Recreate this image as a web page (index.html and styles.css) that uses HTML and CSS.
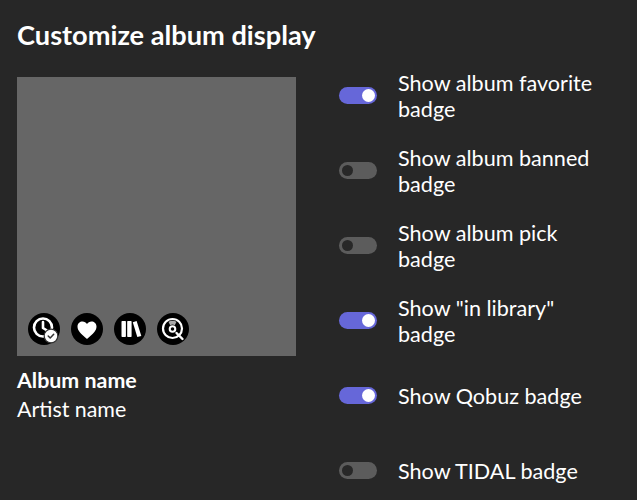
FILE: index.html
```html
<!DOCTYPE html>
<html lang="en">
<head>
<meta charset="utf-8">
<title>Customize album display</title>
<link rel="stylesheet" href="styles.css">
</head>
<body>
<main class="panel">
  <h1 class="title">Customize album display</h1>
  <div class="columns">
    <section class="preview">
      <div class="cover">
        <div class="badges">
          <span class="badge">
            <svg viewBox="0 0 32 32" width="32" height="32">
              <circle cx="15" cy="14.500" r="9" fill="none" stroke="#fff" stroke-width="2.600"/>
              <path d="M15 9V15L19 17.500" fill="none" stroke="#fff" stroke-width="2.600" stroke-linecap="round" stroke-linejoin="round"/>
              <circle cx="23" cy="23" r="6.800" fill="#fff" stroke="#333" stroke-width="1.200"/>
              <path d="M20.200 23l2 2 3.500-3.800" fill="none" stroke="#333" stroke-width="1.500" stroke-linecap="round" stroke-linejoin="round"/>
            </svg>
          </span>
          <span class="badge">
            <svg viewBox="0 0 32 32" width="32" height="32">
              <path d="M16 26C9.500 20.800 6.500 17.600 6.500 13.600 6.500 10.500 8.900 8.500 11.500 8.500c1.900 0 3.500.9 4.500 2.600 1-1.700 2.600-2.600 4.500-2.600 2.600 0 5 2 5 5.100 0 4-3 7.200-9.500 12.400z" fill="#fff"/>
            </svg>
          </span>
          <span class="badge">
            <svg viewBox="0 0 32 32" width="32" height="32">
              <rect x="7.500" y="8" width="4.400" height="16" rx=".7" fill="#fff"/>
              <rect x="13.200" y="8" width="4.400" height="16" rx=".7" fill="#fff"/>
              <path d="M18.800 9.200l3.800-1.200 4.700 14.900-4 1.200z" fill="#fff"/>
            </svg>
          </span>
          <span class="badge">
            <svg viewBox="0 0 32 32" width="32" height="32">
              <circle cx="15.500" cy="15.500" r="9.500" fill="none" stroke="#fff" stroke-width="2.200"/>
              <circle cx="15.500" cy="16" r="2.800" fill="none" stroke="#fff" stroke-width="2"/>
              <path d="M11.500 8.800a8 8 0 0 1 8 0L17.800 12.200a4.500 4.500 0 0 0-4.600 0z" fill="#aaa"/>
              <path d="M19.500 20l6 6" stroke="#fff" stroke-width="2.400" stroke-linecap="round"/>
            </svg>
          </span>
        </div>
      </div>
      <div class="album-name">Album name</div>
      <div class="artist-name">Artist name</div>
    </section>
    <section class="options">
      <div class="option"><span class="toggle on"></span><span class="label">Show album favorite badge</span></div>
      <div class="option"><span class="toggle"></span><span class="label">Show album banned badge</span></div>
      <div class="option"><span class="toggle"></span><span class="label">Show album pick badge</span></div>
      <div class="option"><span class="toggle on"></span><span class="label">Show "in library" badge</span></div>
      <div class="option"><span class="toggle on"></span><span class="label">Show Qobuz badge</span></div>
      <div class="option"><span class="toggle"></span><span class="label">Show TIDAL badge</span></div>
    </section>
  </div>
</main>
</body>
</html>
```

FILE: styles.css
```css
html, body {
  margin: 0;
  height: 100%;
  overflow: hidden;
  background: #272727;
}
body {
  font-family: Lato, sans-serif;
  color: #fff;
}
.panel {
  padding: 18px 0 0 17px;
}
.title {
  margin: 0;
  font-size: 27.2px;
  line-height: 33px;
  font-weight: 700;
}
.columns {
  display: flex;
  gap: 43px;
  margin-top: 6px;
}
.preview {
  width: 279px;
  flex: none;
  padding-top: 20px;
}
.cover {
  width: 279px;
  height: 279px;
  background: #666;
  display: flex;
  align-items: flex-end;
  padding: 0 0 11px 11px;
  box-sizing: border-box;
}
.badges {
  display: flex;
  gap: 11px;
}
.badge {
  width: 32px;
  height: 32px;
  border-radius: 50%;
  background: #000;
  display: block;
}
.badge svg {
  display: block;
}
.album-name {
  margin-top: 11px;
  font-size: 21.4px;
  line-height: 26px;
  font-weight: 700;
}
.artist-name {
  margin-top: 3px;
  font-size: 21.4px;
  line-height: 26px;
}
.options {
  width: 255px;
  display: flex;
  flex-direction: column;
}
.option {
  height: 75px;
  display: flex;
  align-items: center;
  gap: 21px;
}
.toggle {
  position: relative;
  flex: none;
  width: 38px;
  height: 17px;
  margin-top: 2px;
  border-radius: 9px;
  background: #5c5c5c;
}
.toggle::after {
  content: "";
  position: absolute;
  top: 3px;
  left: 3px;
  width: 11px;
  height: 11px;
  border-radius: 50%;
  background: #282828;
}
.toggle.on {
  background: #6667d9;
}
.toggle.on::after {
  left: auto;
  right: 2px;
  top: 2px;
  width: 13px;
  height: 13px;
  background: #fff;
}
.label {
  margin-top: 2px;
  font-size: 21.6px;
  line-height: 26px;
}
```
